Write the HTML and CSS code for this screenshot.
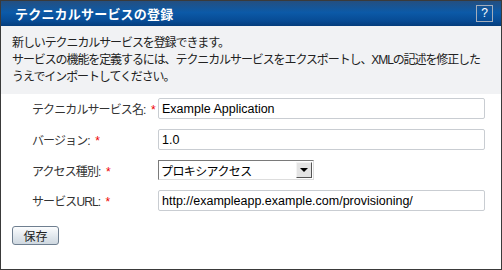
FILE: index.html
```html
<!DOCTYPE html>
<html lang="ja">
<head>
    <meta charset="UTF-8">
    <title>テクニカルサービスの登録</title>
    <link rel="stylesheet" href="styles.css">
</head>
<body>
    <div class="panel">
        <div class="title-bar">
            <span class="title">テクニカルサービスの登録</span>
            <span class="help">?</span>
        </div>
        <div class="intro">
            新しいテクニカルサービスを登録できます。<br>
            サービスの機能を定義するには、テクニカルサービスをエクスポートし、XMLの記述を修正した<br>
            うえでインポートしてください。
        </div>
        <div class="form">
            <div class="row">
                <label>テクニカルサービス名: <span class="req">*</span></label>
                <input class="field" type="text" value="Example Application">
            </div>
            <div class="row">
                <label>バージョン: <span class="req">*</span></label>
                <input class="field" type="text" value="1.0">
            </div>
            <div class="row">
                <label>アクセス種別: <span class="req">*</span></label>
                <div class="select">
                    <span class="select-text">プロキシアクセス</span>
                    <span class="select-btn"><span class="arrow"></span></span>
                </div>
            </div>
            <div class="row">
                <label>サービスURL: <span class="req">*</span></label>
                <input class="field" type="text" value="http://exampleapp.example.com/provisioning/">
            </div>
            <div class="actions">
                <button class="save">保存</button>
            </div>
        </div>
    </div>
</body>
</html>
```

FILE: styles.css
```css
body{
    margin: 0;
    background: #fff;
    font-family: "Liberation Sans", "Noto Sans CJK JP", sans-serif;
}
.panel{
    width: 502px;
    height: 270px;
    box-sizing: border-box;
    border: 1px solid #3a3a3a;
    background: #fff;
    display: flex;
    flex-direction: column;
}
.title-bar{
    height: 25px;
    box-sizing: border-box;
    background: linear-gradient(#244f80 0%, #0c5aa8 45%, #074b94 80%, #053d7c 100%);
    display: flex;
    align-items: center;
    justify-content: space-between;
    padding: 0 8px 0 14px;
}
.title{
    color: #fff;
    font-weight: bold;
    font-size: 13px;
    letter-spacing: 0.2px;
}
.help{
    width: 15px;
    height: 15px;
    border: 1px solid #a4adbb;
    color: #fff;
    font-size: 12px;
    line-height: 15px;
    text-align: center;
}
.intro{
    background: #f1f2f4;
    padding: 9px 11px 8px;
    font-size: 12px;
    line-height: 17px;
    letter-spacing: -1.1px;
    white-space: nowrap;
    color: #222;
}
.form{
    padding: 4px 0 0 0;
    display: flex;
    flex-direction: column;
    gap: 10px;
}
.row{
    display: flex;
    align-items: center;
    padding-left: 31px;
}
.row label{
    width: 126px;
    font-size: 12px;
    letter-spacing: -0.9px;
    white-space: nowrap;
    color: #333;
}
.req{
    color: #e00;
    margin-left: 3px;
    letter-spacing: 0;
}
.field{
    width: 327px;
    height: 21px;
    box-sizing: border-box;
    border: 1px solid #c9cdd2;
    border-radius: 2px;
    padding: 0 3px;
    font-family: "Liberation Sans", sans-serif;
    font-size: 12.5px;
    color: #000;
    background: #fff;
    margin: 0;
}
.select{
    width: 156px;
    height: 20px;
    box-sizing: border-box;
    border: 1px solid #7a7a7a;
    border-right-color: #ddd;
    border-bottom-color: #ddd;
    display: flex;
    align-items: center;
    justify-content: space-between;
    background: #fff;
}
.select-text{
    font-size: 12px;
    letter-spacing: -0.6px;
    padding-left: 2px;
    color: #000;
}
.select-btn{
    width: 16px;
    height: 16px;
    box-sizing: border-box;
    margin-right: 1px;
    border: 1px solid #555;
    border-top-color: #f4f4f4;
    border-left-color: #f4f4f4;
    background: #e4e4e4;
    display: flex;
    align-items: center;
    justify-content: center;
}
.arrow{
    width: 0;
    height: 0;
    border-left: 4px solid transparent;
    border-right: 4px solid transparent;
    border-top: 4px solid #000;
}
.actions{
    padding: 5px 0 0 11px;
}
.save{
    width: 47px;
    height: 19px;
    border: 1px solid #6f7f90;
    border-radius: 3px;
    background: linear-gradient(#fcfdfe, #dfe6ec 60%, #cfd8e0);
    font-family: "Noto Sans CJK JP", sans-serif;
    font-size: 12px;
    color: #222;
    padding: 0;
    line-height: 17px;
}
```
